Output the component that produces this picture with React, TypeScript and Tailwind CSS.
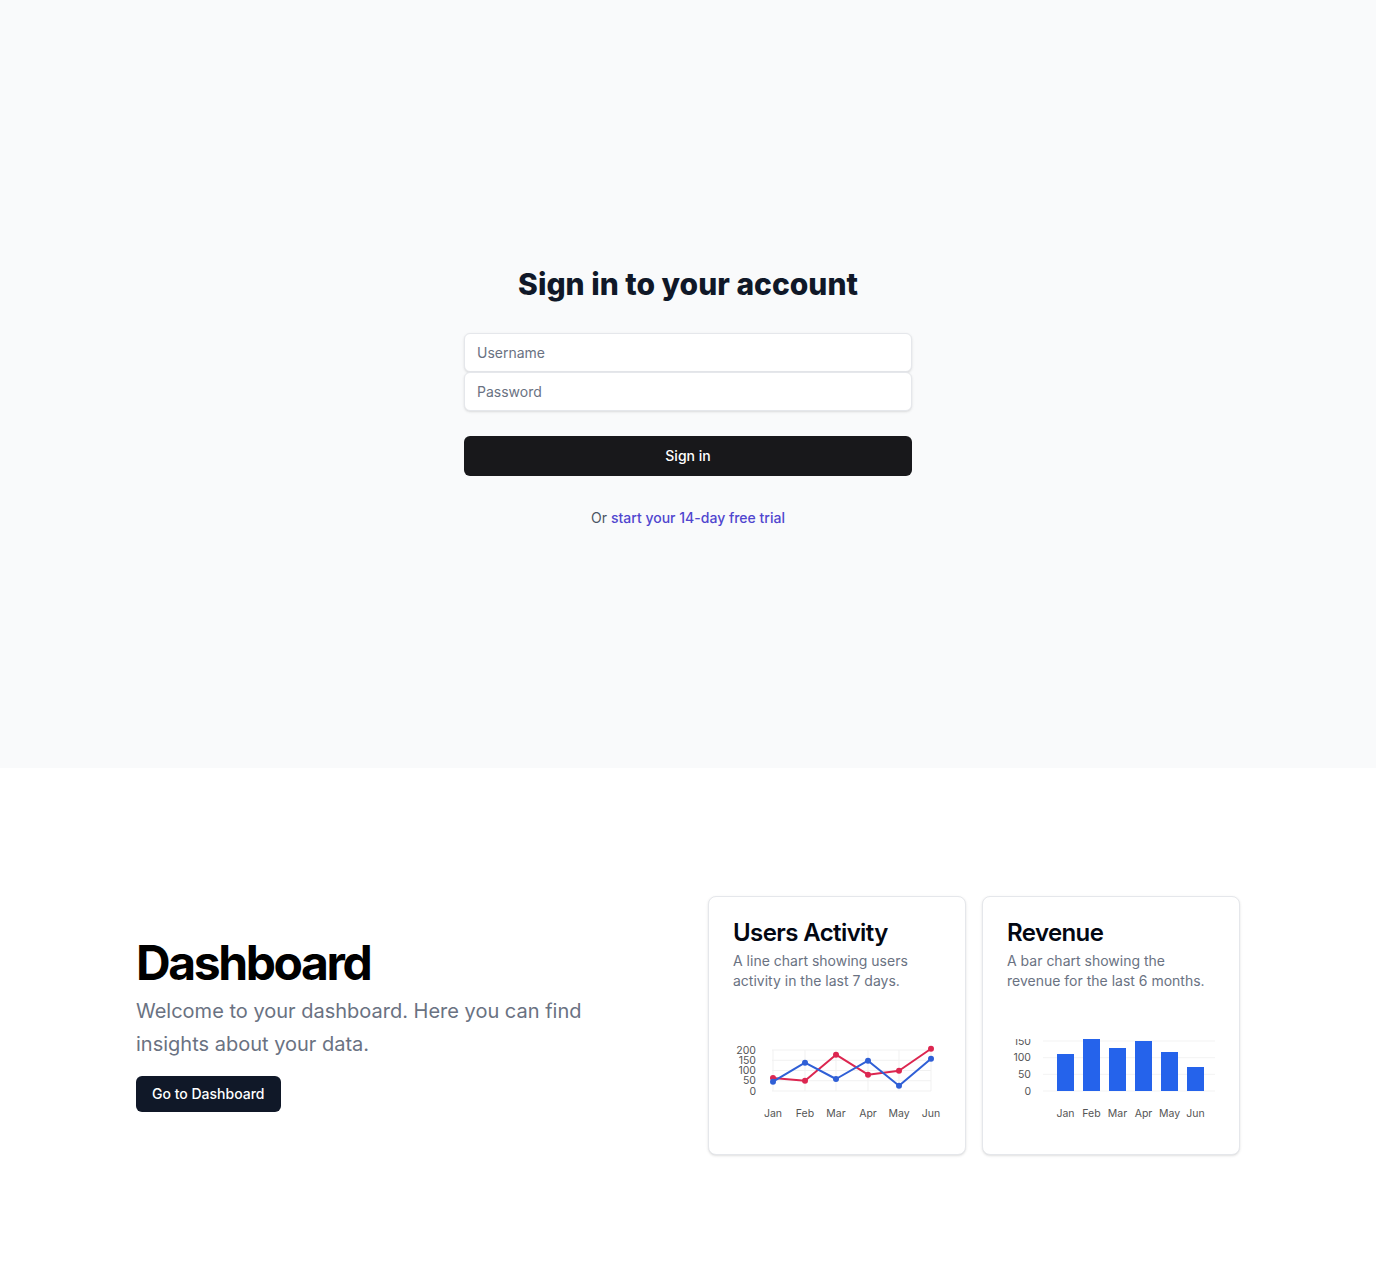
import React from 'react';

const months = ['Jan', 'Feb', 'Mar', 'Apr', 'May', 'Jun'];

// pixel positions inside the 210x116 chart boxes
const lineX = [40, 72, 103, 135, 166, 198];
const redY = [64, 66.7, 40.7, 60.7, 56.7, 34.7];
const blueY = [67.7, 48.7, 65, 46.7, 71.7, 44.7];

const barX = [50, 76, 102, 128, 154, 180];
const barTop = [40, 25, 34, 27, 38, 53];

const pts = (ys: number[]) => ys.map((y, i) => `${lineX[i]},${y}`).join(' ');

const LineChart = () => (
  <svg width="210" height="116" className="block">
    {[36, 46.25, 56.5, 66.75, 77].map((y) => (
      <line key={y} x1="39" x2="198" y1={y} y2={y} stroke="#f1f1f1" strokeWidth="1" />
    ))}
    {lineX.map((x) => (
      <line key={x} x1={x} x2={x} y1="36" y2="77" stroke="#f1f1f1" strokeWidth="1" />
    ))}
    {[
      ['200', 36],
      ['150', 46.25],
      ['100', 56.5],
      ['50', 66.75],
      ['0', 77],
    ].map(([t, y]) => (
      <text key={t} x="23" y={y as number} dy="0.35em" textAnchor="end" fontSize="10.5" fill="#555">
        {t}
      </text>
    ))}
    {months.map((m, i) => (
      <text key={m} x={lineX[i]} y="99" dy="0.35em" textAnchor="middle" fontSize="10.5" fill="#555">
        {m}
      </text>
    ))}
    <polyline points={pts(redY)} fill="none" stroke="#dc2650" strokeWidth="2" strokeLinejoin="round" />
    {redY.map((y, i) => (
      <circle key={i} cx={lineX[i]} cy={y} r="3" fill="#dc2650" />
    ))}
    <polyline points={pts(blueY)} fill="none" stroke="#2f5fd6" strokeWidth="2" strokeLinejoin="round" />
    {blueY.map((y, i) => (
      <circle key={i} cx={lineX[i]} cy={y} r="3" fill="#2f5fd6" />
    ))}
  </svg>
);

const BarChart = () => (
  <svg width="210" height="116" className="block">
    <defs>
      <clipPath id="barclip">
        <rect x="0" y="25" width="210" height="91" />
      </clipPath>
    </defs>
    <g clipPath="url(#barclip)">
      {[27, 43.7, 60.3, 77].map((y) => (
        <line key={y} x1="36" x2="208" y1={y} y2={y} stroke="#f3f3f3" strokeWidth="1" />
      ))}
      {[
        ['150', 27],
        ['100', 43.7],
        ['50', 60.3],
        ['0', 77],
      ].map(([t, y]) => (
        <text key={t} x="24" y={y as number} dy="0.35em" textAnchor="end" fontSize="10.5" fill="#555">
          {t}
        </text>
      ))}
      {barX.map((x, i) => (
        <rect key={x} x={x} y={barTop[i]} width="17" height={77 - barTop[i]} fill="#2563eb" />
      ))}
      {months.map((m, i) => (
        <text key={m} x={barX[i] + 8.5} y="99" dy="0.35em" textAnchor="middle" fontSize="10.5" fill="#555">
          {m}
        </text>
      ))}
    </g>
  </svg>
);

const Card = ({ title, desc, children }: { title: string; desc: string; children: React.ReactNode }) => (
  <div className="rounded-lg border border-gray-200 bg-white shadow-sm">
    <div className="flex flex-col gap-1.5 px-6 pt-6 pb-[23px]">
      <h3 className="text-2xl leading-none font-semibold tracking-tight text-gray-950">{title}</h3>
      <p className="text-sm text-gray-500">{desc}</p>
    </div>
    <div className="px-6 pb-6">{children}</div>
  </div>
);

export default function App() {
  return (
    <div className="font-['Inter',sans-serif]">
      <section className="flex h-[768px] flex-col items-center bg-gray-50 pt-[266px]">
        <div className="w-full max-w-md">
          <h2 className="text-center text-3xl font-extrabold text-gray-900">Sign in to your account</h2>
          <form className="mt-[31px]" onSubmit={(e) => e.preventDefault()}>
            <div className="flex flex-col">
              <input
                type="text"
                placeholder="Username"
                className="h-[39px] w-full rounded-md border border-gray-200 bg-white px-3 text-sm text-gray-900 placeholder-gray-500 shadow-sm outline-none"
              />
              <input
                type="password"
                placeholder="Password"
                className="h-[39px] w-full rounded-md border border-gray-200 bg-white px-3 text-sm text-gray-900 placeholder-gray-500 shadow-sm outline-none"
              />
            </div>
            <button className="mt-[25px] flex h-10 w-full items-center justify-center rounded-md bg-[#18181b] text-sm font-medium text-white">
              Sign in
            </button>
          </form>
          <p className="mt-8 text-center text-sm text-[#4b5563]">
            Or{' '}
            <a href="#" className="font-medium text-[#5046cf]">
              start your 14-day free trial
            </a>
          </p>
        </div>
      </section>

      <section className="bg-white px-[136px] py-32">
        <div className="grid grid-cols-2 items-center gap-10">
          <div className="flex flex-col gap-4">
            <div className="flex flex-col gap-2">
              <h1 className="text-5xl leading-none font-bold tracking-tighter text-black">Dashboard</h1>
              <p className="max-w-[480px] text-xl/relaxed text-gray-500">
                Welcome to your dashboard. Here you can find insights about your data.
              </p>
            </div>
            <div>
              <button className="inline-flex h-9 items-center rounded-md bg-gray-900 px-4 text-sm font-medium text-white">
                Go to Dashboard
              </button>
            </div>
          </div>
          <div className="grid grid-cols-2 gap-4">
            <Card title="Users Activity" desc="A line chart showing users activity in the last 7 days.">
              <LineChart />
            </Card>
            <Card title="Revenue" desc="A bar chart showing the revenue for the last 6 months.">
              <BarChart />
            </Card>
          </div>
        </div>
      </section>
    </div>
  );
}
